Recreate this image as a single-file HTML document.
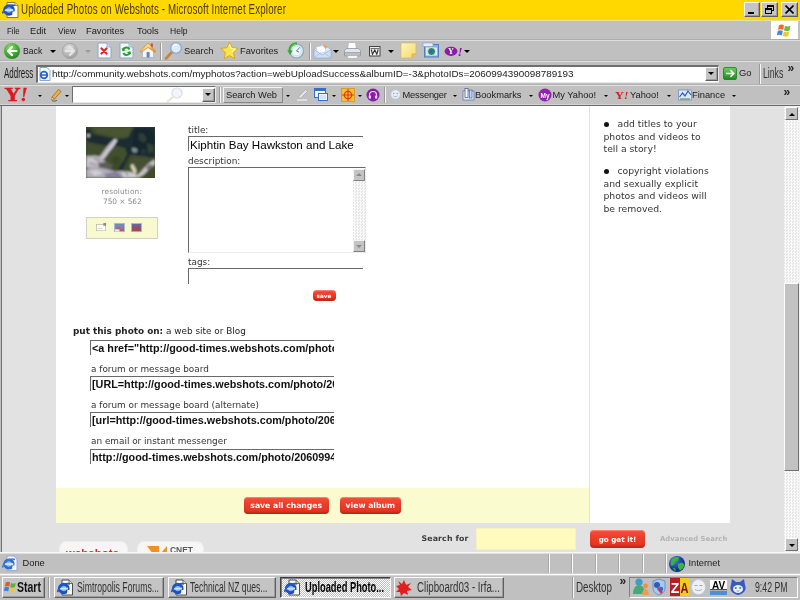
<!DOCTYPE html>
<html>
<head>
<meta charset="utf-8">
<title>Uploaded Photos on Webshots - Microsoft Internet Explorer</title>
<style>
*{box-sizing:border-box;margin:0;padding:0}
html,body{width:800px;height:600px;overflow:hidden;background:#c0c0c0}
body{position:relative;font-family:"Liberation Sans","DejaVu Sans",sans-serif;font-size:11px;color:#000}
.a{position:absolute}
.t{position:absolute;white-space:nowrap;line-height:1}
.ui{font-family:"Liberation Sans",sans-serif;font-size:9.3px;color:#1a1a1a}
.vd{font-family:"DejaVu Sans","Liberation Sans",sans-serif;font-size:9.250px;color:#333}
.vs{font-size:8.900px}
.deco{font-family:"Liberation Sans",sans-serif;transform-origin:0 0;white-space:nowrap;position:absolute;line-height:1}
.hl{position:absolute;left:0;width:800px;height:1px}
.btn3d{position:absolute;background:#c4c4c4;border:1px solid;border-color:#fcfcfc #5e5e5e #5e5e5e #fcfcfc;box-shadow:inset -1px -1px 0 #9c9c9c}
.arr{position:absolute;width:0;height:0;border-left:3px solid transparent;border-right:3px solid transparent;border-top:3px solid #000}
.arrs{position:absolute;width:0;height:0;border-left:2px solid transparent;border-right:2px solid transparent;border-top:2px solid #000}
.sep{position:absolute;width:2px;border-left:1px solid #9a9a9a;border-right:1px solid #f6f6f6}
.inset{position:absolute;background:#fff;border:1px solid;border-color:#5a5a5a #d8d8d8 #d8d8d8 #5a5a5a;border-width:2px 1px 1px 2px}
.redbtn{position:absolute;overflow:hidden;border-radius:4px;background:linear-gradient(#f4503a,#ec3c28 45%,#e0341f);color:#fff;font-family:"DejaVu Sans",sans-serif;font-weight:bold;font-size:7.700px;text-align:center;white-space:nowrap;box-shadow:inset 0 -2px 2px rgba(150,20,10,.45), inset 0 1px 1px rgba(255,170,150,.6)}
.chk{background-image:conic-gradient(#fff 25%,#c0c0c0 0 50%,#fff 0 75%,#c0c0c0 0);background-size:2px 2px}
.codebox{width:244px;height:15px;background:#fff;border-top:1.500px solid #6a6a6a;border-left:1.500px solid #6a6a6a;overflow:hidden;white-space:nowrap;font-family:"Liberation Sans",sans-serif;font-weight:bold;font-size:10.800px;line-height:14px;color:#111;padding-left:1px}
.tk{top:580px;font-size:14px;color:#333;transform:scaleX(.6)}
.sb{position:absolute;background:#c2c2c2;border:1.500px solid;border-color:#fdfdfd #707070 #707070 #fdfdfd}
.trk{background-color:#f0f0f0;background-image:conic-gradient(#fafafa 25%,#e6e6e6 0 50%,#fafafa 0 75%,#e6e6e6 0);background-size:3px 3px}
</style>
</head>
<body><div id="all" style="position:absolute;left:0;top:0;width:800px;height:600px;filter:blur(.6px);will-change:transform">

<!-- ================= TITLE BAR ================= -->
<div class="a" id="titlebar" style="left:0;top:0;width:800px;height:20px;background:#ffd800"></div>
<div class="a" style="left:0;top:20px;width:800px;height:1px;background:#e8e0a0"></div>

<!-- IE page icon -->
<svg class="a" style="left:2px;top:1px" width="18" height="18" viewBox="0 0 18 18">
 <path d="M5 1.5h8l3 3V16.5H5z" fill="#fffbe8" stroke="#8a7a30" stroke-width="1"/>
 <path d="M13 1.5v3h3" fill="#e8dca0" stroke="#8a7a30" stroke-width=".8"/>
 <circle cx="7" cy="9" r="4.300" fill="#7eb0f4" stroke="#1c4fc4" stroke-width="3"/>
 <rect x="2.600" y="8.100" width="8.600" height="2" fill="#cfe2fb"/>
 <path d="M10.600 10.500l2.600 0 0 2.500-3 .5z" fill="#fffbe8"/>
 <path d="M.5 12.500c1.500-6.500 7.500-9.500 12.500-8" fill="none" stroke="#2458d0" stroke-width="1.600"/>
</svg>
<div class="deco" id="wtitle" style="left:20.500px;top:1.900px;font-size:14px;color:#4a3a00;letter-spacing:0.2px;transform:scaleX(.696)">Uploaded Photos on Webshots - Microsoft Internet Explorer</div>
<div class="btn3d" style="left:744px;top:2px;width:16px;height:15px"><div class="a" style="left:3px;top:9px;width:6px;height:2px;background:#000"></div></div>
<div class="btn3d" style="left:761px;top:2px;width:17px;height:15px">
  <div class="a" style="left:5px;top:2px;width:7px;height:6px;border:1px solid #000;border-top-width:2px"></div>
  <div class="a" style="left:3px;top:5px;width:7px;height:6px;border:1px solid #000;border-top-width:2px;background:#c0c0c0"></div>
</div>
<div class="btn3d" style="left:781px;top:2px;width:17px;height:15px">
 <svg class="a" style="left:3px;top:2px" width="9" height="9" viewBox="0 0 9 9"><path d="M.5.5l8 8M8.5.5l-8 8" stroke="#000" stroke-width="1.6"/></svg>
</div>


<!-- ================= MENU BAR ================= -->

<div class="t ui" id="m1" style="left:6.500px;transform-origin:0 0;transform:scaleX(.84);top:26.500px">File</div>
<div class="t ui" id="m2" style="left:30px;top:26.500px">Edit</div>
<div class="t ui" id="m3" style="left:57.500px;transform-origin:0 0;transform:scaleX(.9);top:26.500px">View</div>
<div class="t ui" id="m4" style="left:86px;top:26.500px">Favorites</div>
<div class="t ui" id="m5" style="left:137px;top:26.500px">Tools</div>
<div class="t ui" id="m6" style="left:170px;transform-origin:0 0;transform:scaleX(.92);top:26.500px">Help</div>
<div class="a" style="left:771px;top:21px;width:27px;height:18px;background:#fff"></div>
<svg class="a" style="left:777px;top:23px" width="16" height="15" viewBox="0 0 16 15">
 <path d="M2 2.2c2-1 3.5-.8 5 .2L6 7C4.500 6 3 6 1 6.800z" fill="#f0682c"/>
 <path d="M8 2.800c2 1 3.500 1 5.500 0L12.500 7.500c-2 1-3.500 1-5.500 0z" fill="#6cbf3c"/>
 <path d="M.800 7.800c2-1 3.500-.8 5 .2L4.800 12.500c-1.500-1-3-1-5-.2z" fill="#3f8be0"/>
 <path d="M6.800 8.500c2 1 3.500 1 5.500 0L11.300 13c-2 1-3.500 1-5.500 0z" fill="#f4c52c"/>
</svg>
<div class="hl" style="top:39px;background:#adadad"></div>
<div class="hl" style="top:40px;background:#dedede"></div>


<!-- ================= TOOLBAR ================= -->

<!-- back -->
<svg class="a" style="left:3px;top:42px" width="18" height="18" viewBox="0 0 18 18">
 <defs><radialGradient id="gb" cx=".4" cy=".3" r=".8"><stop offset="0" stop-color="#8ee070"/><stop offset=".6" stop-color="#3aa82c"/><stop offset="1" stop-color="#1e7a1c"/></radialGradient>
 <radialGradient id="gf" cx=".4" cy=".3" r=".8"><stop offset="0" stop-color="#e4e4e4"/><stop offset=".7" stop-color="#acacac"/><stop offset="1" stop-color="#909090"/></radialGradient></defs>
 <circle cx="9" cy="9" r="8" fill="url(#gb)"/>
 <path d="M13.500 9H5.500M9 5L5 9l4 4" fill="none" stroke="#fff" stroke-width="2.200" stroke-linejoin="round" stroke-linecap="round"/>
</svg>
<div class="t ui" id="tb_back" style="left:22.500px;transform-origin:0 0;transform:scaleX(.93);top:46.700px">Back</div>
<div class="arr" style="left:50px;top:50px"></div>
<svg class="a" style="left:61px;top:42px" width="18" height="18" viewBox="0 0 18 18">
 <circle cx="9" cy="9" r="7.600" fill="url(#gf)" stroke="#a2a2a2" stroke-width=".8"/>
 <path d="M4.500 9h8M9 5l4 4-4 4" fill="none" stroke="#e6e6e6" stroke-width="2.200" stroke-linejoin="round" stroke-linecap="round"/>
</svg>
<div class="arr" style="left:85px;top:50px;border-top-color:#9a9a9a"></div>
<!-- stop -->
<svg class="a" style="left:97px;top:42px" width="15" height="17" viewBox="0 0 15 17">
 <path d="M1 1h9l4 4v11H1z" fill="#f4f7fd" stroke="#8fa4d0" stroke-width="1"/>
 <path d="M10 1v4h4" fill="#cfdbf2" stroke="#8fa4d0" stroke-width=".8"/>
 <path d="M4.500 6.500l5 5M9.500 6.500l-5 5" stroke="#e0281c" stroke-width="2.200" stroke-linecap="round"/>
</svg>
<!-- refresh -->
<svg class="a" style="left:119px;top:42px" width="15" height="17" viewBox="0 0 15 17">
 <path d="M1 1h9l4 4v11H1z" fill="#f4f7fd" stroke="#8fa4d0" stroke-width="1"/>
 <path d="M10 1v4h4" fill="#cfdbf2" stroke="#8fa4d0" stroke-width=".8"/>
 <path d="M10.500 7.500A3.600 3.600 0 0 0 4 7.800" fill="none" stroke="#28a02c" stroke-width="2"/>
 <path d="M2.500 6l1.200 3.500L7 8z" fill="#28a02c"/>
 <path d="M4.300 11A3.600 3.600 0 0 0 10.900 10.700" fill="none" stroke="#28a02c" stroke-width="2"/>
 <path d="M12.400 12.500L11.200 9 7.900 10.500z" fill="#28a02c"/>
</svg>
<!-- home -->
<svg class="a" style="left:139px;top:41px" width="19" height="19" viewBox="0 0 19 19">
 <defs><linearGradient id="gh" x1="0" y1="0" x2="1" y2="1"><stop offset="0" stop-color="#fbd878"/><stop offset="1" stop-color="#e8902c"/></linearGradient></defs>
 <rect x="11.800" y="2.500" width="2" height="4" fill="#c05030"/>
 <path d="M3.500 9.500L9 5l5.500 4.500V16.500h-11z" fill="#f4f7fd" stroke="#9fb0d4" stroke-width=".8"/>
 <path d="M1 10.500L9 2l8 8.500-1.500.8L9 6.500 2.500 11.300z" fill="url(#gh)" stroke="#d8882c" stroke-width=".6"/>
 <path d="M2.500 9.800L9 3l3.500 3.700L9 5.800z" fill="#fbe08a"/>
 <rect x="7.600" y="11" width="3" height="5.500" fill="#6a82b8"/>
</svg>
<div class="sep" style="left:160px;top:43px;height:17px"></div>
<!-- search -->
<svg class="a" style="left:164px;top:41px" width="19" height="19" viewBox="0 0 19 19">
 <path d="M2 17.500l6-6.500" stroke="#c8843c" stroke-width="2.600" stroke-linecap="round"/>
 <circle cx="12" cy="7" r="5.400" fill="#dcecfc" stroke="#8aa6d4" stroke-width="1.300"/>
 <path d="M9 5.500a3.500 3.500 0 0 1 4-1.500" stroke="#fff" stroke-width="1.400" fill="none"/>
</svg>
<div class="t ui" id="tb_search" style="left:184px;top:46.700px">Search</div>
<!-- favorites star -->
<svg class="a" style="left:220px;top:41px" width="19" height="19" viewBox="0 0 19 19">
 <path d="M9.500 1l2.600 5.700 6.100.7-4.600 4.200 1.300 6.100-5.400-3.100-5.400 3.100 1.300-6.100L.800 7.400l6.100-.7z" fill="#fbe64a" stroke="#d8a818" stroke-width="1"/>
 <path d="M9.500 3.500l1.600 4 4 .5-3 2.800" fill="none" stroke="#fff8b8" stroke-width="1.200"/>
</svg>
<div class="t ui" id="tb_fav" style="left:240px;top:46.700px">Favorites</div>
<!-- history -->
<svg class="a" style="left:287px;top:42px" width="18" height="18" viewBox="0 0 18 18">
 <circle cx="9.500" cy="9" r="7" fill="#d9edf7" stroke="#8ea6bc" stroke-width="1.200"/>
 <circle cx="9.500" cy="9" r="4.800" fill="#eef7fc" stroke="#b4cadc" stroke-width=".5"/>
 <path d="M9.500 9l3.200-3.600M9.500 9l2.600 1.200" stroke="#5878a8" stroke-width="1" fill="none"/>
 <path d="M10 1.600C5 1.300 2.300 5 2.800 9.500" fill="none" stroke="#3aa63a" stroke-width="2.600"/>
 <path d="M.2 8.200l5.400.4-2.400 4.600z" fill="#3aa63a"/>
 <path d="M9.500 2.200C6 2.200 3.800 5 3.900 8" fill="none" stroke="#8ade7a" stroke-width=".9"/>
</svg>
<div class="sep" style="left:309px;top:43px;height:17px"></div>
<!-- mail -->
<svg class="a" style="left:313px;top:42px" width="19" height="18" viewBox="0 0 19 18">
 <path d="M1 7.500L9.500 2 18 7.500V16H1z" fill="#e4eefb" stroke="#9ab4dc" stroke-width=".8"/>
 <path d="M3.500 4h9v7h-9z" fill="#fff" stroke="#b0b8c8" stroke-width=".5" transform="rotate(-12 8 7)"/>
 <path d="M9 3l5 1-1 3z" fill="#f49a3c"/>
 <path d="M1 7.500l8.500 5.500L18 7.500V16H1z" fill="#cfe0f7" stroke="#9ab4dc" stroke-width=".8"/>
 <path d="M1 16l6.500-5M18 16l-6.500-5" stroke="#9ab4dc" stroke-width=".7"/>
</svg>
<div class="arr" style="left:333px;top:50px"></div>
<!-- print -->
<svg class="a" style="left:343px;top:41px" width="19" height="19" viewBox="0 0 19 19">
 <path d="M5.500 1.500h7l1 7h-9z" fill="#fdfdfd" stroke="#a8b0c0" stroke-width=".7"/>
 <path d="M1.500 9.500l2-2h12l2 2v5h-16z" fill="#e2e4ea" stroke="#8c92a0" stroke-width=".8"/>
 <path d="M1.500 11.500h16v3.500h-16z" fill="#b9bdc8" stroke="#8c92a0" stroke-width=".6"/>
 <path d="M4 14.500h11l-1 3H5z" fill="#f6f6f6" stroke="#a0a4b0" stroke-width=".6"/>
</svg>
<!-- W edit -->
<svg class="a" style="left:369px;top:45.500px" width="12" height="11" viewBox="0 0 12 11">
 <rect x=".5" y=".5" width="10.500" height="9.500" fill="#efefef" stroke="#444" stroke-width="1"/>
 <path d="M2.300 3.500l1.200 4.800L5.800 4l2 4.300L9.200 3.500" fill="none" stroke="#333" stroke-width="1.100"/>
 <path d="M1.500 2.600h8.500" stroke="#444" stroke-width=".8"/>
</svg>
<div class="arr" style="left:388px;top:50px"></div>
<!-- note -->
<svg class="a" style="left:400px;top:42px" width="17" height="17" viewBox="0 0 17 17">
 <defs><linearGradient id="gn" x1="0" y1="0" x2="1" y2="1"><stop offset="0" stop-color="#fff6c0"/><stop offset="1" stop-color="#f4d868"/></linearGradient></defs>
 <path d="M1 1h15v11l-4 4H1z" fill="url(#gn)" stroke="#d8b850" stroke-width=".7"/>
 <path d="M16 12h-4v4" fill="#e8c454" stroke="#c8a440" stroke-width=".6"/>
</svg>
<!-- messenger-ish -->
<svg class="a" style="left:422px;top:42px" width="18" height="17" viewBox="0 0 18 17">
 <rect x="2.500" y="2.500" width="14" height="12.500" fill="#86b0ea" stroke="#4a78c8" stroke-width=".9"/>
 <rect x="1" y="1" width="10" height="3.500" fill="#e8eef8" stroke="#7c98cc" stroke-width=".6"/>
 <rect x="4" y="5.500" width="11" height="8" fill="#dceafa"/>
 <circle cx="9.500" cy="9.500" r="4" fill="#2c8a58" stroke="#eaf4ff" stroke-width=".8"/>
 <path d="M7 8.500c1.500-2 4-1 4.500.5-1 .5-2 2-3 2z" fill="#2e66c8"/>
</svg>
<!-- Y! purple -->
<svg class="a" style="left:444px;top:44px" width="20" height="14" viewBox="0 0 20 14">
 <ellipse cx="7" cy="7.300" rx="6.400" ry="4.600" fill="#8a1ca8"/>
 <text x="7" y="10" font-family="Liberation Serif,serif" font-weight="bold" font-size="8" fill="#fff" text-anchor="middle">Y</text>
 <text x="16" y="11.500" font-family="Liberation Serif,serif" font-weight="bold" font-style="italic" font-size="13" fill="#8a1ca8" text-anchor="middle">!</text>
</svg>
<div class="arr" style="left:464px;top:50px"></div>
<div class="hl" style="top:60px;background:#b2b2b2"></div>
<div class="hl" style="top:61px;background:#e0e0e0"></div>


<!-- ================= ADDRESS ================= -->

<div class="deco" id="addrlbl" style="left:4px;top:66px;font-size:14px;color:#1a1a1a;transform:scaleX(.57)">Address</div>
<div class="a" style="left:36px;top:65px;width:683px;height:18px;background:#fff;border:1px solid;border-color:#6e6e6e #e8e8e8 #e8e8e8 #6e6e6e;border-width:2px 1px 1px 2px"></div>
<svg class="a" style="left:38px;top:67px" width="13" height="14" viewBox="0 0 13 14">
 <path d="M2 .5h7l3 3V13.500H2z" fill="#f4f8ff" stroke="#7f9ccc" stroke-width=".9"/>
 <circle cx="6" cy="8" r="3.300" fill="none" stroke="#2c62cc" stroke-width="1.800"/>
 <rect x="3" y="7.300" width="6" height="1.500" fill="#2c62cc"/>
</svg>
<div class="t ui" id="url" style="left:52px;top:69.300px;font-size:9.900px">http://community.webshots.com/myphotos?action=webUploadSuccess&amp;albumID=-3&amp;photoIDs=2060994390098789193</div>
<div class="btn3d" style="left:705px;top:67px;width:13px;height:14px"><div class="arr" style="left:2px;top:4px"></div></div>
<svg class="a" style="left:723px;top:67px" width="14" height="13" viewBox="0 0 14 13">
 <defs><linearGradient id="gg" x1="0" y1="0" x2="0" y2="1"><stop offset="0" stop-color="#6cd060"/><stop offset="1" stop-color="#228a24"/></linearGradient></defs>
 <rect x=".5" y=".5" width="13" height="12" rx="1.500" fill="url(#gg)" stroke="#1e7a20" stroke-width=".8"/>
 <path d="M3 6.500h7.500M7.500 3.200l3.300 3.300-3.300 3.300" fill="none" stroke="#fff" stroke-width="1.500"/>
</svg>
<div class="t ui" id="go" style="left:739px;top:69px">Go</div>
<div class="sep" style="left:759px;top:64px;height:20px"></div>
<div class="deco" id="links" style="left:763px;top:66px;font-size:14px;color:#333;transform:scaleX(.62)">Links</div>
<div class="t" style="left:787.500px;top:61.500px;font-size:12px;font-weight:bold;color:#222;font-family:'Liberation Sans',sans-serif">»</div>
<div class="hl" style="top:84px;background:#b2b2b2"></div>
<div class="hl" style="top:85px;background:#e0e0e0"></div>


<!-- ================= YAHOO BAR ================= -->

<svg class="a" style="left:4px;top:86px" width="26" height="17" viewBox="0 0 26 17">
 <text x="0.500" y="14.800" font-family="Liberation Serif,serif" font-weight="bold" font-size="18.500" fill="#e0181c" stroke="#e0181c" stroke-width=".5" textLength="16" lengthAdjust="spacingAndGlyphs">Y</text>
 <text x="16.500" y="14.500" font-family="Liberation Serif,serif" font-weight="bold" font-style="italic" font-size="18" fill="#e0181c" stroke="#e0181c" stroke-width=".5">!</text>
</svg>
<div class="arrs" style="left:38px;top:95px"></div>
<svg class="a" style="left:50px;top:88px" width="12" height="14" viewBox="0 0 12 14">
 <path d="M8.500 1.500l2.500 2L4.500 11 2 9z" fill="#f0b040" stroke="#8a5a14" stroke-width=".7"/>
 <path d="M2 9l2.500 2-3 1z" fill="#f4dcb0" stroke="#8a5a14" stroke-width=".5"/>
 <path d="M2 12.800c2 .6 4 .4 5-.6" stroke="#4a5a2a" stroke-width=".9" fill="none"/>
</svg>
<div class="arrs" style="left:65px;top:95px"></div>
<div class="a" style="left:72px;top:86px;width:144px;height:17px;background:#fff;border:1px solid;border-color:#6e6e6e #e8e8e8 #e8e8e8 #6e6e6e"></div>
<svg class="a" style="left:163px;top:87px" width="22" height="16" viewBox="0 0 22 16">
 <circle cx="14" cy="6" r="5" fill="#f2f6fb" stroke="#d8e0ea" stroke-width="1.200"/>
 <path d="M10 10l-6 5" stroke="#e8e2d8" stroke-width="2.200"/>
</svg>
<div class="btn3d" style="left:202px;top:88px;width:13px;height:14px"><div class="arr" style="left:2px;top:4px"></div></div>
<div class="sep" style="left:219px;top:87px;height:16px"></div>
<div class="a" style="left:223px;top:87px;width:60px;height:16px;border:1px solid;border-color:#f4f4f4 #868686 #868686 #f4f4f4"></div>
<div class="t ui" id="sweb" style="margin-top:.5px;left:226px;top:90px">Search Web</div>
<div class="arrs" style="left:286px;top:95px"></div>
<svg class="a" style="left:296px;top:88px" width="13" height="13" viewBox="0 0 13 13">
 <path d="M9.500 1.500l2 2L5 10l-2.500.7.500-2.500z" fill="#e4e4e4" stroke="#a4a4a4" stroke-width=".7"/>
 <path d="M1 12h10" stroke="#f4f4f4" stroke-width="1.200"/>
</svg>
<svg class="a" style="left:314px;top:88px" width="14" height="13" viewBox="0 0 14 13">
 <rect x=".5" y=".5" width="11" height="9" fill="#f4f8ff" stroke="#3a6cd0" stroke-width="1"/>
 <rect x=".5" y=".5" width="11" height="2.500" fill="#3a6cd0"/>
 <rect x="4.500" y="5.500" width="9" height="7" fill="#f4f8ff" stroke="#3a6cd0" stroke-width="1"/>
 <path d="M6 8h6M6 10h6" stroke="#a8c0e8" stroke-width=".8"/>
</svg>
<div class="arrs" style="left:332px;top:95px"></div>
<svg class="a" style="left:341px;top:88px" width="14" height="14" viewBox="0 0 14 14">
 <rect x=".5" y=".5" width="13" height="13" fill="#f8c030" stroke="#e09018" stroke-width=".8"/>
 <circle cx="7" cy="7" r="3.600" fill="none" stroke="#e03818" stroke-width="1.300"/>
 <path d="M7 1v12M1 7h12" stroke="#e03818" stroke-width="1.100"/>
</svg>
<div class="arrs" style="left:358px;top:95px"></div>
<svg class="a" style="left:366px;top:88px" width="14" height="14" viewBox="0 0 14 14">
 <circle cx="7" cy="7" r="6.500" fill="#8a1ca8"/>
 <path d="M3.500 8.500V7a3.500 3.500 0 0 1 7 0v1.500" fill="none" stroke="#f4d8fc" stroke-width="1.200"/>
 <rect x="2.800" y="7.500" width="2.200" height="3.200" rx=".8" fill="#f4d8fc"/>
 <rect x="9" y="7.500" width="2.200" height="3.200" rx=".8" fill="#f4d8fc"/>
</svg>
<div class="sep" style="left:384px;top:87px;height:16px"></div>
<svg class="a" style="left:390px;top:89px" width="11" height="11" viewBox="0 0 11 11">
 <circle cx="5.500" cy="5.500" r="4.800" fill="#e8eef6" stroke="#b4c0d0" stroke-width=".8"/>
 <circle cx="3.800" cy="4.500" r=".7" fill="#8a98ac"/><circle cx="7.200" cy="4.500" r=".7" fill="#8a98ac"/>
 <path d="M3.300 6.800c1.200 1.200 3.200 1.200 4.400 0" stroke="#8a98ac" stroke-width=".7" fill="none"/>
</svg>
<div class="t ui" id="y_msg" style="margin-top:.5px;left:402.500px;letter-spacing:-.2px;top:90px">Messenger</div>
<div class="arrs" style="left:453px;top:95px"></div>
<svg class="a" style="left:462px;top:88px" width="13" height="13" viewBox="0 0 13 13">
 <rect x="1" y="3" width="11" height="9" fill="#e4ecf8" stroke="#5a78b8" stroke-width=".8"/>
 <rect x="3" y=".5" width="3" height="9" fill="#f8f8ff" stroke="#4a64a4" stroke-width=".8"/>
 <rect x="7.500" y="2" width="2.500" height="8" fill="#c8d8f0" stroke="#4a64a4" stroke-width=".7"/>
</svg>
<div class="t ui" id="y_bm" style="margin-top:.5px;left:475px;top:90px">Bookmarks</div>
<div class="arrs" style="left:529px;top:95px"></div>
<svg class="a" style="left:538px;top:88px" width="14" height="14" viewBox="0 0 14 14">
 <circle cx="7" cy="7" r="6.500" fill="#9420b0"/>
 <text x="7" y="9.500" font-family="Liberation Sans,sans-serif" font-weight="bold" font-size="6.500" fill="#fff" text-anchor="middle">My</text>
</svg>
<div class="t ui" id="y_my" style="margin-top:.5px;left:552.500px;top:90px">My Yahoo!</div>
<div class="arrs" style="left:604px;top:95px"></div>
<svg class="a" style="left:615px;top:89px" width="15" height="12" viewBox="0 0 15 12">
 <text x="0" y="10" font-family="Liberation Serif,serif" font-weight="bold" font-size="11" fill="#e0181c" textLength="9" lengthAdjust="spacingAndGlyphs">Y</text>
 <text x="9" y="10" font-family="Liberation Serif,serif" font-weight="bold" font-style="italic" font-size="11" fill="#e0181c">!</text>
</svg>
<div class="t ui" id="y_y" style="margin-top:.5px;left:630px;top:90px">Yahoo!</div>
<div class="arrs" style="left:667px;top:95px"></div>
<svg class="a" style="left:678px;top:88px" width="14" height="13" viewBox="0 0 14 13">
 <rect x=".5" y="2" width="13" height="10" fill="#dce8f8" stroke="#6a88c4" stroke-width=".7"/>
 <path d="M1.500 9l3-4 2.500 3 3-5 3 4" fill="none" stroke="#2c58b8" stroke-width="1.200"/>
 <path d="M2 11h10" stroke="#5a9a4a" stroke-width="1.200"/>
</svg>
<div class="t ui" id="y_fin" style="margin-top:.5px;left:692px;top:90px">Finance</div>
<div class="arrs" style="left:732px;top:95px"></div>
<div class="t" style="left:783.500px;top:86px;font-size:12px;font-weight:bold;color:#222;font-family:'Liberation Sans',sans-serif">»</div>
<div class="hl" style="top:104px;background:#d4d4d4"></div>
<div class="hl" style="top:105px;background:#6a6a6a"></div>
<div class="a" style="left:1px;top:105px;width:1px;height:448px;background:#707070"></div>


<!-- ================= PAGE ================= -->
<div class="a" id="page" style="left:2px;top:106px;width:782px;height:446px;background:#e2e2e2;overflow:hidden">

<div class="a" id="pg" style="left:-2px;top:-106px;width:800px;height:600px">
 <!-- white content -->
 <div class="a" style="left:56px;top:106px;width:674px;height:417px;background:#fff"></div>
 <div class="a" style="left:589px;top:106px;width:1px;height:417px;background:#e4e4e4"></div>
 <!-- yellow band -->
 <div class="a" style="left:56px;top:488px;width:533px;height:35px;background:#fbfbd0"></div>

 <!-- thumbnail -->
 <svg class="a" style="left:86px;top:127px" width="69" height="51" viewBox="0 0 69 51">
  <defs><filter id="bl" x="-10%" y="-10%" width="120%" height="120%"><feGaussianBlur stdDeviation="1"/></filter>
  <clipPath id="cp"><rect width="69" height="51"/></clipPath></defs>
  <rect width="69" height="51" fill="#3c482c"/>
  <g clip-path="url(#cp)"><g filter="url(#bl)">
   <path d="M6 0h40l-3 9-8 2-12-2-12-3z" fill="#485431"/>
   <path d="M0 12l10 1 12 2 4 3-8 9-8 3H0z" fill="#414d2d"/>
   <path d="M0 2l4 0 2 5 9 2 10 2 10 1 7-1 3-6 4-5h20v30l-5 1-5-2-6 1-5-3-4 1-3 5-3 6-2 7-3 0 1-7 3-7 3-6-2-5-7-1-10-1-10-2-9-2-2-5z" fill="#1c2c31"/>
   <path d="M48 2l8-1 9 3 4 9-2 9-8 5-8-1-4-8z" fill="#15252e"/>
   <path d="M53 6l5 1 3 5-3 4-5-3z" fill="#2e4036"/>
   <path d="M61 16l6 2 1 7-6 1z" fill="#324433"/>
   <path d="M56 22l4 1-1 4-4-1z" fill="#2a3c34"/>
   <path d="M46 21l4 0 2 3-3 2-3-2z" fill="#7f9096"/>
   <path d="M23 22l8-3 8 2 2 6-4 8-6 4-8-2-4-6z" fill="#42502e"/>
   <path d="M26 30l6-1 3 4-4 5-5-2z" fill="#364428"/>
   <path d="M44 31l10-2 10 2 5-1v4l-10 6-8 4-6-4z" fill="#445030"/>
   <path d="M60 42l9-5v14H56z" fill="#3f4b2c"/>
   <path d="M29 11.500l2.500 1.500-3.500 6-5 6-5 7-5 3-4-2 6-5 5-7 5-6z" fill="#cfcbd3"/>
   <path d="M27 14l-7 9-5 7" stroke="#8e8a96" stroke-width=".8" fill="none"/>
   <path d="M0 29l10-.5 6 2.500 4 4-2 4-8 2-10 0z" fill="#b6b2ba"/>
   <path d="M0 32l6-1 6 3-4 4-8 1z" fill="#cac6ce"/>
   <path d="M3 36l6 1M8 31l5 3" stroke="#77737b" stroke-width="1" fill="none"/>
   <path d="M12 36l8-1 7 3-2 4-11 0z" fill="#5e5c58"/>
   <path d="M0 42l10-2 10 2 10 2 12 0 8 2 2 5H0z" fill="#b2aeb8"/>
   <path d="M3 44l8-1 6 3-8 3z" fill="#d2ced6"/>
   <path d="M18 47l8-2 8 1 2 5H20z" fill="#8682a0"/>
   <path d="M36 46l8-1 7 3-2 3H38z" fill="#cfcbd1"/>
   <path d="M28 44l3 4M40 45l2 4" stroke="#5a5668" stroke-width="1" fill="none"/>
   <path d="M69 32.500v5l-5 4-6 6-5 3.500-3-2 6-6 6-6 4-3z" fill="#c6c2c8"/>
   <path d="M60 40l4-3 3 1-5 6z" fill="#77737d"/>
   <path d="M44 38l3-1 3 5 1 4-3 0-3-4z" fill="#d6d0b2"/>
   <path d="M1 7l3 0 0 3-3 0z" fill="#aab4b4"/>
  </g></g>
 </svg>
 <div class="t" id="res1" style="left:101.500px;top:188.200px;font-family:'DejaVu Sans',sans-serif;font-size:7.400px;color:#8c8c8c;letter-spacing:.12px">resolution:</div>
 <div class="t" id="res2" style="left:103px;top:197.700px;font-family:'DejaVu Sans',sans-serif;font-size:7.400px;color:#8c8c8c;letter-spacing:-.05px">750 × 562</div>
 <div class="a" style="left:86px;top:217px;width:72px;height:22px;background:#f9f9d0;border:1px solid #d2d2c4"></div>
 <svg class="a" style="left:96px;top:223px" width="11" height="8.250" viewBox="0 0 12 9"><rect x=".5" y="1.500" width="10" height="7" fill="#fdfdf4" stroke="#b8b8a8" stroke-width=".8"/><rect x="8" y="0" width="3" height="3" fill="#8a8a80"/><path d="M2 6h5" stroke="#c8c8b8" stroke-width=".8"/></svg>
 <svg class="a" style="left:114px;top:222.500px" width="11" height="9" viewBox="0 0 12 10"><rect x=".5" y=".5" width="11" height="9" fill="#7088c4" stroke="#b4b4c0" stroke-width="1"/><path d="M1 9l4-5 3 3 3-2v4z" fill="#c85858"/><rect x="1" y="7" width="5" height="2.500" fill="#e8e8f4"/></svg>
 <svg class="a" style="left:131px;top:222.500px" width="11" height="9" viewBox="0 0 12 10"><rect x=".5" y=".5" width="11" height="9" fill="#5c68a8" stroke="#b4b4c0" stroke-width="1"/><rect x="1.500" y="4" width="9" height="5" fill="#a84848"/></svg>

 <!-- form -->
 <div class="t vd vs" id="l_title" style="left:188px;top:125.500px">title:</div>
 <div class="a" style="left:188px;top:136px;width:175px;height:15px;background:#fff;border-top:1.500px solid #6a6a6a;border-left:1.500px solid #6a6a6a"></div>
 <div class="t" id="v_title" style="left:190px;top:138.500px;font-family:'Liberation Sans',sans-serif;font-size:11.600px;color:#000">Kiphtin Bay Hawkston and Lake</div>
 <div class="t vd vs" id="l_desc" style="left:188px;top:156.500px">description:</div>
 <div class="a" style="left:188px;top:167px;width:178px;height:86px;background:#fff;border:1.500px solid #6a6a6a;border-right:1px solid #e0e0e0;border-bottom:1px solid #ececec"></div>
 <div class="a trk" style="left:353px;top:169px;width:12.500px;height:83px"></div>
 <div class="btn3d" style="left:353px;top:169px;width:12px;height:12px;border-color:#f4f4f4 #808080 #808080 #f4f4f4;box-shadow:none"><div class="arr" style="left:2px;top:3px;border-top:none;border-bottom:3px solid #8a8a8a"></div></div>
 <div class="btn3d" style="left:353px;top:240px;width:12px;height:12px;border-color:#f4f4f4 #808080 #808080 #f4f4f4;box-shadow:none"><div class="arr" style="left:2px;top:4px;border-top-color:#8a8a8a"></div></div>
 <div class="t vd vs" id="l_tags" style="left:188px;top:257.500px">tags:</div>
 <div class="a" style="left:188px;top:268px;width:175px;height:16px;background:#fff;border-top:1.500px solid #6a6a6a;border-left:1.500px solid #6a6a6a"></div>
 <div class="redbtn" id="b_save" style="left:312.500px;top:289.500px;width:23px;height:11.500px;font-size:5.700px;line-height:13.500px">save</div>

 <!-- put this photo on -->
 <div class="t vd vs" id="l_put" style="left:73px;top:327px;color:#222"><b>put this photo on:</b> a web site or Blog</div>
 <div class="a codebox" style="left:90px;top:340px"><span id="c1">&lt;a href<span>=</span><span>&quot;</span><span>http://good-times.webshots.com/photo/2060994390098789193</span>&quot;&gt;</span></div>
 <div class="t vd vs" id="l_f1" style="left:91px;top:365px">a forum or message board</div>
 <div class="a codebox" style="left:90px;top:376px"><span id="c2">[URL=http://good-times.webshots.com/photo/2060994390098789193]</span></div>
 <div class="t vd vs" id="l_f2" style="left:91px;top:401px">a forum or message board (alternate)</div>
 <div class="a codebox" style="left:90px;top:412px"><span id="c3">[url=http://good-times.webshots.com/photo/2060994390098789193]</span></div>
 <div class="t vd vs" id="l_f3" style="left:91px;top:437.300px">an email or instant messenger</div>
 <div class="a codebox" style="left:90px;top:449px"><span id="c4">http://good-times.webshots.com/photo/2060994390098789193</span></div>

 <!-- bottom buttons -->
 <div class="redbtn" id="b_all" style="left:243.500px;top:497px;width:85.500px;height:16.500px;line-height:18.400px">save all changes</div>
 <div class="redbtn" id="b_view" style="left:339.500px;top:497px;width:61.500px;height:16.500px;line-height:18.400px">view album</div>

 <!-- right col text -->
 <div class="a" style="left:604px;top:122px;width:5px;height:5px;border-radius:50%;background:#111"></div>
 <div class="t vd" id="r1" style="left:617.500px;top:119px">add titles to your</div>
 <div class="t vd" id="r2" style="left:603.500px;top:131.500px">photos and videos to</div>
 <div class="t vd" id="r3" style="left:603.500px;top:144px">tell a story!</div>
 <div class="a" style="left:604px;top:169px;width:5px;height:5px;border-radius:50%;background:#111"></div>
 <div class="t vd" id="r4" style="left:617.500px;top:166px">copyright violations</div>
 <div class="t vd" id="r5" style="left:603.500px;top:178.500px">and sexually explicit</div>
 <div class="t vd" id="r6" style="left:603.500px;top:191px">photos and videos will</div>
 <div class="t vd" id="r7" style="left:603.500px;top:203.500px">be removed.</div>

 <!-- footer -->
 <div class="a" style="left:59px;top:541px;width:69px;height:20px;background:#f6f6f6;border-radius:7px 7px 0 0;border:1px solid #ececec"></div>
 <div class="t" id="f_ws" style="left:66px;top:547.500px;font-family:'Liberation Sans',sans-serif;font-weight:bold;font-size:11.200px;color:#d8281c;letter-spacing:.2px">webshots</div>
 <div class="a" style="left:137px;top:541px;width:67px;height:20px;background:#f6f6f6;border-radius:7px 7px 0 0;border:1px solid #ececec"></div>
 <svg class="a" style="left:147px;top:546px" width="20" height="8" viewBox="0 0 20 8"><path d="M0 0h12v8H6z" fill="#f09020"/><path d="M20 0v8h-7z" fill="#f09020"/></svg>
 <div class="t" id="f_cnet" style="left:169.500px;top:544.800px;font-family:'Liberation Sans',sans-serif;font-weight:bold;font-size:9.500px;color:#5a5a5a;transform-origin:0 0;transform:scaleX(.89)">CNET</div>
 <div class="t" id="f_sf" style="left:421.500px;top:535px;font-family:'DejaVu Sans',sans-serif;font-weight:bold;font-size:7.800px;color:#3a3a3a;letter-spacing:.15px">Search for</div>
 <div class="a" style="left:476px;top:528px;width:100px;height:22px;background:#fffbbe;border:1px solid #f4f2c0"></div>
 <div class="redbtn" id="b_go" style="left:590px;top:529.500px;width:55px;height:18.500px;line-height:19.400px;font-size:7.200px">go get it!</div>
 <div class="t" id="f_adv" style="left:660px;top:536px;font-family:'DejaVu Sans',sans-serif;font-weight:bold;font-size:6.800px;color:#b2b2b2;letter-spacing:.08px">Advanced Search</div>
</div>

</div>

<!-- ================= SCROLLBAR ================= -->

<div class="a trk" style="left:784px;top:106px;width:15px;height:446px"></div>
<div class="a" style="left:798.500px;top:106px;width:1.500px;height:446px;background:#f4f4f4"></div>
<div class="sb" style="left:784.500px;top:107px;width:13.500px;height:13px"><div class="arr" style="left:3.500px;top:4.500px;border-top:none;border-bottom:3px solid #000"></div></div>
<div class="sb" style="left:784px;top:283px;width:14.500px;height:187.500px"></div>
<div class="sb" style="left:784.500px;top:537.500px;width:13.500px;height:13.500px"><div class="arr" style="left:3.500px;top:5px"></div></div>

<!-- ================= STATUS BAR ================= -->

<div class="hl" style="top:552px;background:#f8f8f8"></div><div class="hl" style="top:553px;background:#dedede"></div>
<div class="a" style="left:0;top:554px;width:800px;height:19px;background:#c0c0c0"></div>
<svg class="a" style="left:2px;top:555px" width="17" height="17" viewBox="0 0 17 17">
 <path d="M5 1h7l3 3V15.500H5z" fill="#f4f8ff" stroke="#8fa4d0" stroke-width=".9"/>
 <circle cx="7" cy="9" r="4.200" fill="#8ebcf6" stroke="#2c6ad8" stroke-width="2.800"/>
 <rect x="2.800" y="8.100" width="8.400" height="2" fill="#d4e6fc"/>
 <path d="M10.500 10.500l2.500 0 0 2.500-3 .5z" fill="#f4f8ff"/>
 <path d="M.5 12.500c1.500-6.500 7.500-9.500 12.500-8" fill="none" stroke="#3a78e0" stroke-width="1.500"/>
</svg>
<div class="t ui" id="st_done" style="left:22.500px;top:559px">Done</div>
<div class="sep" style="left:548px;top:554px;height:19px;border-left-color:#aaa;border-right-color:#fbfbfb"></div>
<div class="sep" style="left:571px;top:554px;height:19px;border-left-color:#aaa;border-right-color:#fbfbfb"></div>
<div class="sep" style="left:595px;top:554px;height:19px;border-left-color:#aaa;border-right-color:#fbfbfb"></div>
<div class="sep" style="left:618px;top:554px;height:19px;border-left-color:#aaa;border-right-color:#fbfbfb"></div>
<div class="sep" style="left:642px;top:554px;height:19px;border-left-color:#aaa;border-right-color:#fbfbfb"></div>
<div class="sep" style="left:665px;top:554px;height:19px;border-left-color:#aaa;border-right-color:#fbfbfb"></div>
<svg class="a" style="left:668px;top:555px" width="18" height="18" viewBox="0 0 18 18">
 <defs><radialGradient id="ge" cx=".35" cy=".3" r=".8"><stop offset="0" stop-color="#4a84e0"/><stop offset=".6" stop-color="#173c9c"/><stop offset="1" stop-color="#0a2468"/></radialGradient></defs>
 <circle cx="9" cy="9" r="8" fill="url(#ge)"/>
 <path d="M4 4c2-2 5-2.500 7-1.500l-1 3-3 1-1 3-2.500 1.500C2 9 2.500 6 4 4z" fill="#3cb43c"/>
 <path d="M10 9l4-1.500 2.500 2c-.5 3-2 5-4.500 6l-2-3z" fill="#3cb43c"/>
 <path d="M5 13l2 0 1 3-2-.8z" fill="#38a838"/>
</svg>
<div class="t ui" id="st_inet" style="left:688.500px;top:559px">Internet</div>


<!-- ================= TASKBAR ================= -->

<div class="hl" style="top:573px;background:#d0d0d0"></div><div class="hl" style="top:574px;background:#fbfbfb"></div><div class="hl" style="top:575px;background:#d6d6d6"></div>
<div class="a" style="left:0;top:576px;width:800px;height:24px;background:#c0c0c0"></div>
<div class="btn3d" style="left:2px;top:577px;width:43px;height:21px"></div>
<svg class="a" style="left:4px;top:580px" width="14" height="14" viewBox="0 0 16 15">
 <path d="M2 2.200c2-1 3.500-.8 5 .2L6 7C4.500 6 3 6 1 6.800z" fill="#e8582c"/>
 <path d="M8 2.800c2 1 3.500 1 5.500 0L12.500 7.500c-2 1-3.500 1-5.500 0z" fill="#5cb03c"/>
 <path d="M.800 7.800c2-1 3.500-.8 5 .2L4.800 12.500c-1.500-1-3-1-5-.2z" fill="#3f7be0"/>
 <path d="M6.800 8.500c2 1 3.500 1 5.500 0L11.300 13c-2 1-3.500 1-5.500 0z" fill="#f4c52c"/>
</svg>
<div class="deco" id="tk_start" style="left:17px;top:580px;font-size:14px;font-weight:bold;color:#111;transform:scaleX(.75)">Start</div>
<div class="sep" style="left:48px;top:577px;height:21px"></div>
<div class="btn3d" style="left:54px;top:577px;width:110px;height:21px"></div>
<div class="btn3d" style="left:168px;top:577px;width:108px;height:21px"></div>
<div class="a chk" style="left:280px;top:577px;width:111px;height:21px;border:1px solid;border-color:#404040 #fff #fff #404040;box-shadow:inset 1px 1px 0 #808080"></div>
<div class="btn3d" style="left:394px;top:577px;width:110px;height:21px"></div>
<svg class="a" style="left:57px;top:579px" width="17" height="17" viewBox="0 0 17 17">
 <path d="M5 1h7l3.500 3.500V16H5z" fill="#fbfbf4" stroke="#3a3a3a" stroke-width=".9"/>
 <path d="M12 1v3.500h3.500" fill="#dcdccc" stroke="#3a3a3a" stroke-width=".7"/>
 <circle cx="6.800" cy="9.500" r="4.300" fill="#7eb0f4" stroke="#1c4fc4" stroke-width="3"/>
 <rect x="2.500" y="8.600" width="8.500" height="2" fill="#cfe2fb"/>
 <path d="M10.500 11l2.500 0 0 2.500-3 .5z" fill="#fbfbf4"/>
 <path d="M.5 13c1.500-6.500 7.500-9.500 12.500-8" fill="none" stroke="#2458d0" stroke-width="1.600"/>
</svg>
<svg class="a" style="left:171px;top:579px" width="17" height="17" viewBox="0 0 17 17">
 <path d="M5 1h7l3.500 3.500V16H5z" fill="#fbfbf4" stroke="#3a3a3a" stroke-width=".9"/>
 <path d="M12 1v3.500h3.500" fill="#dcdccc" stroke="#3a3a3a" stroke-width=".7"/>
 <circle cx="6.800" cy="9.500" r="4.300" fill="#7eb0f4" stroke="#1c4fc4" stroke-width="3"/>
 <rect x="2.500" y="8.600" width="8.500" height="2" fill="#cfe2fb"/>
 <path d="M10.500 11l2.500 0 0 2.500-3 .5z" fill="#fbfbf4"/>
 <path d="M.5 13c1.500-6.500 7.500-9.500 12.500-8" fill="none" stroke="#2458d0" stroke-width="1.600"/>
</svg>
<svg class="a" style="left:284px;top:579px" width="17" height="17" viewBox="0 0 17 17">
 <path d="M5 1h7l3.500 3.500V16H5z" fill="#fbfbf4" stroke="#3a3a3a" stroke-width=".9"/>
 <path d="M12 1v3.500h3.500" fill="#dcdccc" stroke="#3a3a3a" stroke-width=".7"/>
 <circle cx="6.800" cy="9.500" r="4.300" fill="#7eb0f4" stroke="#1c4fc4" stroke-width="3"/>
 <rect x="2.500" y="8.600" width="8.500" height="2" fill="#cfe2fb"/>
 <path d="M10.500 11l2.500 0 0 2.500-3 .5z" fill="#fbfbf4"/>
 <path d="M.5 13c1.500-6.500 7.500-9.500 12.500-8" fill="none" stroke="#2458d0" stroke-width="1.600"/>
</svg>

<svg class="a" style="left:395px;top:579px" width="18" height="17" viewBox="0 0 18 17">
 <path d="M3 2l4 3 2-4 2 5 5-2-3 4 4 3-5 1 1 4-4-2-3 3-1-4-4 0 3-3-3-3 4-1z" fill="#e02020"/>
 <circle cx="9" cy="8.500" r="3.500" fill="#e02020"/>
</svg>
<!-- tray icons -->
<svg class="a" style="left:632px;top:577px" width="18" height="19" viewBox="0 0 18 19">
 <circle cx="7" cy="5" r="3.600" fill="#3c9cc8"/>
 <path d="M1 17c0-6 3-9 6-9s6 3 6 9z" fill="#48a878"/>
 <circle cx="13.500" cy="9" r="2.400" fill="#f0903c"/>
 <path d="M10 18c0-4 1.500-6 3.500-6s3.500 2 3.500 6z" fill="#e8a050"/>
</svg>
<svg class="a" style="left:651px;top:578px" width="16" height="18" viewBox="0 0 16 18">
 <path d="M2 3l6-2 6 2v7c0 4-3 6-6 7-3-1-6-3-6-7z" fill="#a8c8f0" stroke="#5a84c8" stroke-width=".8"/>
 <circle cx="6" cy="7" r="3" fill="#2c5cc0"/>
 <path d="M7 9l5 5-2 2-4-5z" fill="#d83c3c"/>
 <circle cx="10" cy="11" r="2.200" fill="#3868c8"/>
</svg>
<svg class="a" style="left:670px;top:578px" width="19" height="18" viewBox="0 0 19 18">
 <rect x="0" y="0" width="10" height="18" fill="#b81c24"/>
 <rect x="10" y="0" width="9" height="18" fill="#f4cc20"/>
 <text x="5" y="14.500" font-family="Liberation Sans,sans-serif" font-weight="bold" font-size="14" fill="#fff" text-anchor="middle">Z</text>
 <text x="14.500" y="14.500" font-family="Liberation Sans,sans-serif" font-weight="bold" font-size="14" fill="#7a1010" text-anchor="middle" textLength="8" lengthAdjust="spacingAndGlyphs">A</text>
</svg>
<svg class="a" style="left:691px;top:579px" width="15" height="16" viewBox="0 0 15 16">
 <ellipse cx="7.500" cy="8" rx="7" ry="7.500" fill="#eef2f8" stroke="#c0c8d8" stroke-width=".8"/>
 <path d="M3.500 6.500h3M8.500 6.500h3" stroke="#9aa6ba" stroke-width="1"/>
 <path d="M4 10.500c2 1.500 5 1.500 7 0" stroke="#9aa6ba" stroke-width=".9" fill="none"/>
</svg>
<svg class="a" style="left:710px;top:580px" width="17" height="15" viewBox="0 0 17 15">
 <rect x="0" y="0" width="17" height="15" fill="#fff"/>
 <text x="8.500" y="9" font-family="Liberation Sans,sans-serif" font-weight="bold" font-size="10" fill="#000" text-anchor="middle">AV</text>
 <path d="M0 9.800h17" stroke="#000" stroke-width="1"/>
 <rect x="0" y="11" width="17" height="4" fill="#4a90d8"/>
</svg>
<svg class="a" style="left:729px;top:578px" width="18" height="18" viewBox="0 0 18 18">
 <path d="M2 7L3 1l4 3h4l4-3 1 6c1 2 1 5-1 7s-5 3-6 3-4-1-6-3-2-5-1-7z" fill="#3858c8"/>
 <ellipse cx="9" cy="11" rx="5" ry="4" fill="#e8eefc"/>
 <circle cx="6.800" cy="10" r="1.100" fill="#38a050"/><circle cx="11.200" cy="10" r="1.100" fill="#38a050"/>
 <path d="M8 12.500l1 1 1-1" stroke="#3858c8" stroke-width=".8" fill="none"/>
</svg>
<div class="deco tk" id="tk1" style="left:77px;transform:scaleX(.62)">Simtropolis Forums...</div>
<div class="deco tk" id="tk2" style="left:190px;transform:scaleX(.611)">Technical NZ ques...</div>
<div class="deco tk" id="tk3" style="left:304.500px;color:#000;font-weight:bold;transform:scaleX(.664)">Uploaded Photo...</div>
<div class="deco tk" id="tk4" style="left:417px;transform:scaleX(.692)">Clipboard03 - Irfa...</div>
<div class="sep" style="left:572px;top:577px;height:21px"></div>
<div class="deco tk" id="tk5" style="left:576px;transform:scaleX(.70)">Desktop</div>
<div class="t" style="left:619.500px;top:575px;font-size:12px;font-weight:bold;color:#222;font-family:'Liberation Sans',sans-serif">»</div>
<div class="a" style="left:629px;top:577px;width:169px;height:21px;border:1px solid;border-color:#808080 #fff #fff #808080"></div>
<div class="deco tk" id="tk6" style="left:755px;transform:scaleX(.625)">9:42 PM</div>


</div></body>
</html>
